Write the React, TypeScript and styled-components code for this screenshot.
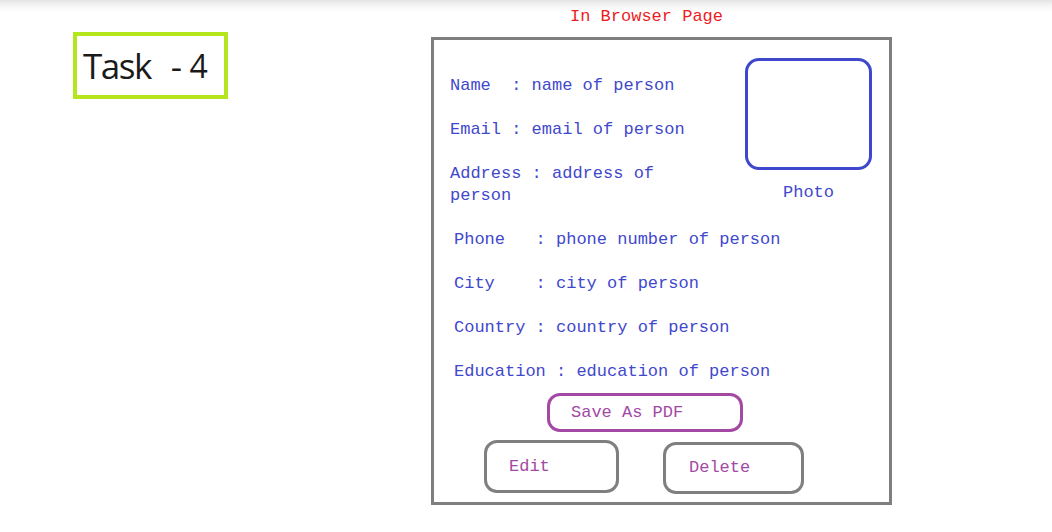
import React from "react";
import styled, { createGlobalStyle } from "styled-components";

const Global = createGlobalStyle`
  html, body { margin: 0; padding: 0; }
  body {
    width: 1052px;
    height: 532px;
    overflow: hidden;
    background: linear-gradient(#e4e4e4 0px, #f6f6f6 6px, #ffffff 12px);
    font-family: "Liberation Mono", monospace;
  }
`;

const Page = styled.div`
  display: flex;
  align-items: flex-start;
  padding-top: 7px;
`;

const TaskBadge = styled.div`
  margin: 25px 0 0 73px;
  width: 141px;
  height: 59px;
  border: 4px solid #b5e61d;
  display: flex;
  align-items: center;
  padding-left: 6px;
  box-sizing: content-box;
  font-family: "Open Sans", sans-serif;
  font-size: 35px;
  letter-spacing: -1.5px;
  color: #1a1a1a;
`;

const Dash = styled.span`
  margin-left: 20px;
`;

const Num = styled.span`
  margin-left: 9px;
  font-size: 32px;
`;

const Main = styled.div`
  margin-left: 203px;
  display: flex;
  flex-direction: column;
`;

const Title = styled.div`
  color: #ed1c24;
  font-size: 17px;
  line-height: 20px;
  padding-left: 139px;
  height: 30px;
`;

const Card = styled.div`
  width: 455px;
  height: 462px;
  border: 3px solid #7f7f7f;
  display: flex;
  flex-direction: column;
  color: #3f48cc;
  font-size: 17px;
  line-height: 22px;
`;

const TopSection = styled.div`
  display: flex;
  justify-content: space-between;
  padding: 18px 17px 0 16px;
`;

const TopFields = styled.div`
  width: 260px;
  padding-top: 17px;
  display: flex;
  flex-direction: column;
  gap: 22px;
`;

const Field = styled.div`
  white-space: pre-wrap;
`;

const PhotoCol = styled.div`
  display: flex;
  flex-direction: column;
  align-items: center;
  gap: 12px;
`;

const PhotoBox = styled.div`
  width: 121px;
  height: 106px;
  border: 3px solid #3f48cc;
  border-radius: 14px;
`;

const Fields = styled.div`
  display: flex;
  flex-direction: column;
  gap: 22px;
  padding: 22px 0 0 20px;
`;

const Button = styled.div<{ $border: string; $w: number; $h: number; $pl: number; $ml: number }>`
  box-sizing: border-box;
  width: ${(p) => p.$w}px;
  height: ${(p) => p.$h}px;
  margin-left: ${(p) => p.$ml}px;
  border: 3px solid ${(p) => p.$border};
  border-radius: 13px;
  color: #a349a4;
  display: flex;
  align-items: center;
  padding-left: ${(p) => p.$pl}px;
  white-space: pre;
`;

const SaveRow = styled.div`
  display: flex;
  padding-top: 10px;
`;

const ActionRow = styled.div`
  display: flex;
  align-items: flex-start;
  padding-top: 8px;
`;

const ShiftedButton = styled(Button)`
  margin-top: 2px;
`;

export default function App() {
  return (
    <>
      <Global />
      <Page>
        <TaskBadge>
          Task<Dash>-</Dash>
          <Num>4</Num>
        </TaskBadge>
        <Main>
          <Title>In Browser Page</Title>
          <Card>
            <TopSection>
              <TopFields>
                <Field>Name  : name of person</Field>
                <Field>Email : email of person</Field>
                <Field>Address : address of person</Field>
              </TopFields>
              <PhotoCol>
                <PhotoBox />
                <span>Photo</span>
              </PhotoCol>
            </TopSection>
            <Fields>
              <Field>Phone   : phone number of person</Field>
              <Field>City    : city of person</Field>
              <Field>Country : country of person</Field>
              <Field>Education : education of person</Field>
            </Fields>
            <SaveRow>
              <Button $border="#a349a4" $w={196} $h={39} $pl={21} $ml={113}>
                Save As PDF
              </Button>
            </SaveRow>
            <ActionRow>
              <Button $border="#7f7f7f" $w={135} $h={53} $pl={22} $ml={50}>
                Edit
              </Button>
              <ShiftedButton $border="#7f7f7f" $w={141} $h={52} $pl={23} $ml={44}>
                Delete
              </ShiftedButton>
            </ActionRow>
          </Card>
        </Main>
      </Page>
    </>
  );
}
